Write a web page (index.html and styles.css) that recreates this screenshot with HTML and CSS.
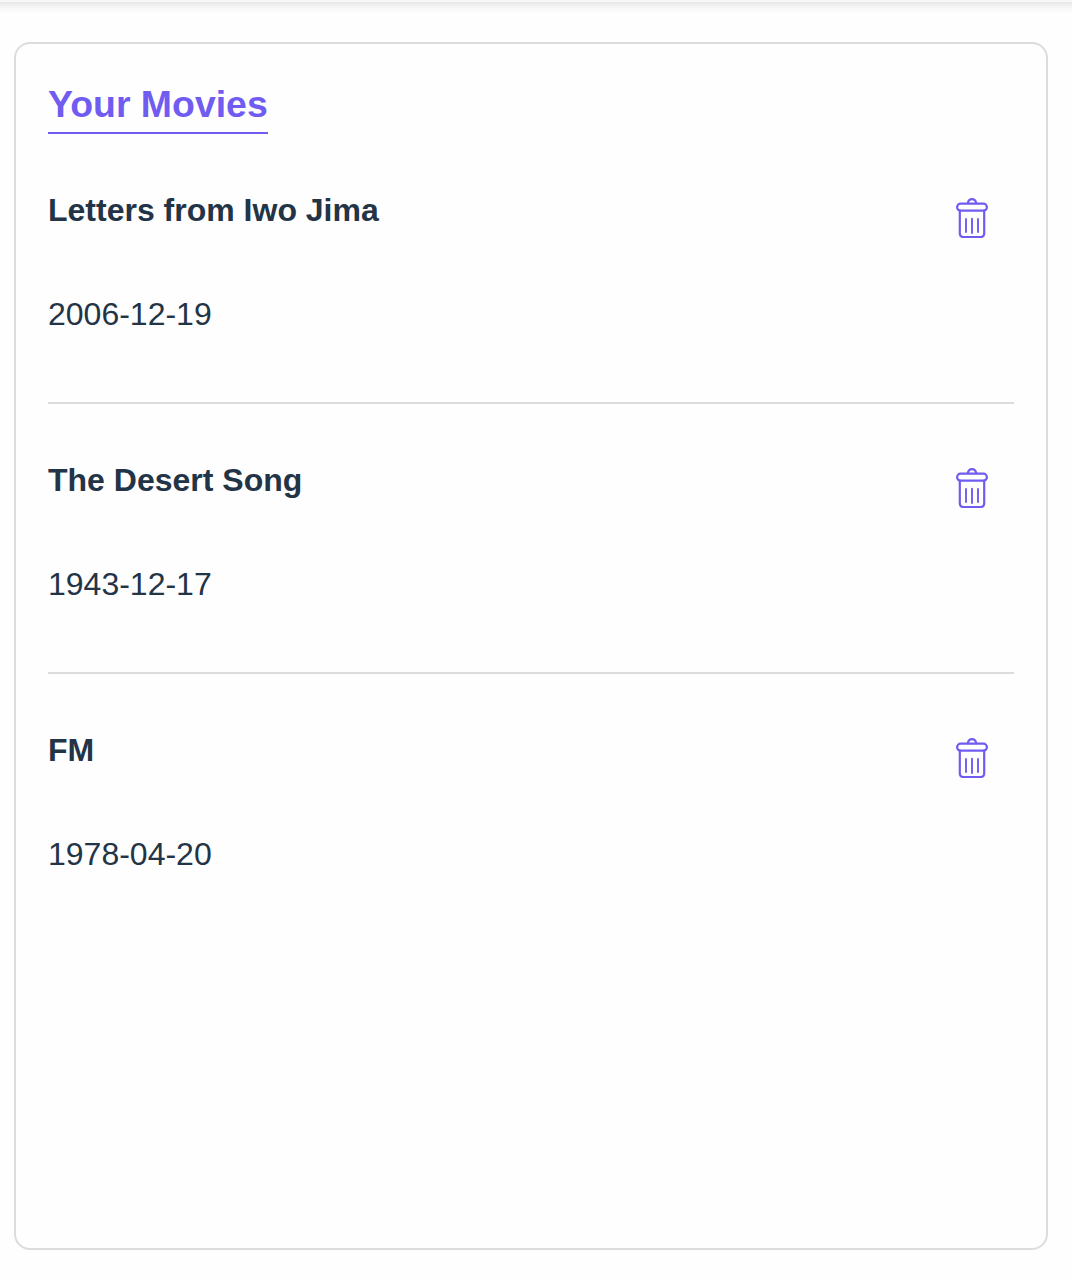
FILE: index.html
```html
<!DOCTYPE html>
<html lang="en">
<head>
<meta charset="utf-8">
<title>Your Movies</title>
<link rel="stylesheet" href="styles.css">
</head>
<body>
<svg class="sprite" aria-hidden="true">
  <symbol id="trash" viewBox="0 0 32 40">
    <g fill="none" stroke="currentColor" stroke-width="2.2" stroke-linecap="round" stroke-linejoin="round">
      <path d="M11.8 5.2C12.3 2.6 13.7 1.2 16 1.2S19.7 2.6 20.2 5.2"/>
      <rect x="1.1" y="5.7" width="29.8" height="7" rx="3.5"/>
      <path d="M3.8 12.7V35.3Q3.8 39 7.5 39H24.5Q28.2 39 28.2 35.3V12.7"/>
      <path stroke-width="1.9" d="M10 21V34M16 20.7V35M22 21V34"/>
    </g>
  </symbol>
</svg>
<header class="topbar"></header>
<main class="card">
  <h3 class="heading">Your Movies</h3>
  <ul class="movies">
    <li class="movie">
      <div><h4 class="title">Letters from Iwo Jima</h4><p class="date">2006-12-19</p></div>
      <button class="delete" aria-label="Delete"><svg class="icon"><use href="#trash"/></svg></button>
    </li>
    <li class="movie">
      <div><h4 class="title">The Desert Song</h4><p class="date">1943-12-17</p></div>
      <button class="delete" aria-label="Delete"><svg class="icon"><use href="#trash"/></svg></button>
    </li>
    <li class="movie">
      <div><h4 class="title">FM</h4><p class="date">1978-04-20</p></div>
      <button class="delete" aria-label="Delete"><svg class="icon"><use href="#trash"/></svg></button>
    </li>
  </ul>
</main>
</body>
</html>
```
FILE: styles.css
```css
* { box-sizing: border-box; }
body {
  margin: 0;
  background: #fefefe;
  color: #243447;
  font: 32px/36px "Liberation Sans", Arial, sans-serif;
}
.sprite { display: none; }
.topbar {
  height: 14px;
  background: linear-gradient(#f7f7f7 2px, #e7e7e7 2px, #f0f0f0 5px, #f9f9f9 9px, #fefefe 14px);
}
.card {
  height: 1208px;
  margin: 28px 24px 0 14px;
  padding: 38px 32px 32px;
  border: 2px solid #dcdcdc;
  border-radius: 16px;
}
.heading {
  width: fit-content;
  margin: 0;
  padding-bottom: 6px;
  border-bottom: 2px solid #705cf0;
  color: #705cf0;
  font-size: 37.44px;
  line-height: 44px;
}
.movies {
  margin: 0;
  padding: 0;
  list-style: none;
}
.movie {
  display: flex;
  justify-content: space-between;
  align-items: flex-start;
  height: 270px;
  padding-top: 58px;
  border-bottom: 2px solid #dcdcdc;
}
.movie:last-child { border-bottom: 0; }
.title {
  margin: 0 0 68px;
  font-size: 32px;
}
.date { margin: 0; }
.delete {
  display: flex;
  margin: 6px 26px 0 0;
  padding: 0;
  border: 0;
  background: none;
  color: #705cf0;
}
.icon {
  width: 32px;
  height: 40px;
}
```
